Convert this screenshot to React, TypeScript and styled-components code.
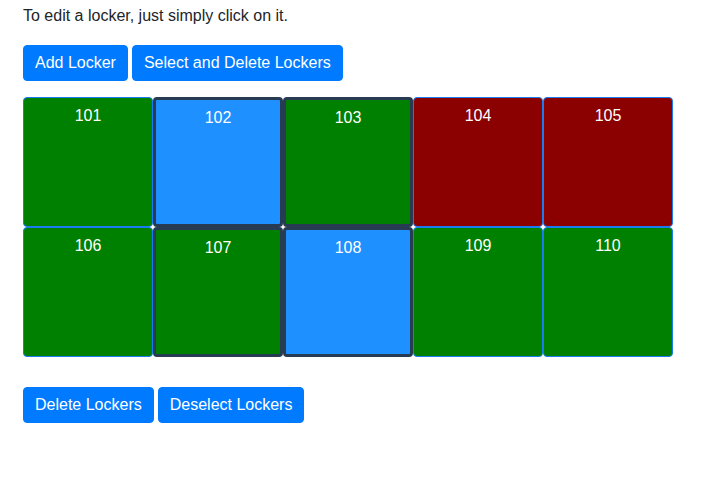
import * as React from 'react';
import styled, { createGlobalStyle } from 'styled-components';

const GlobalStyle = createGlobalStyle`
  body {
    margin: 0;
    background: #fff;
    font-family: "Liberation Sans", Arial, sans-serif;
    color: #212529;
  }
`;

const Page = styled.div`
  padding: 4px 23px;
`;

const Intro = styled.p`
  margin: 0 0 17px;
  font-size: 16px;
  line-height: 24px;
`;

const ButtonRow = styled.div<{ $top?: number }>`
  display: flex;
  gap: 4px;
  margin-top: ${props => props.$top || 0}px;
`;

const Button = styled.button`
  font-family: inherit;
  font-size: 16px;
  line-height: 24px;
  color: #fff;
  background-color: #007bff;
  border: 1px solid #007bff;
  border-radius: 4px;
  padding: 5px 11px;
  cursor: pointer;
`;

const Grid = styled.div`
  display: grid;
  grid-template-columns: repeat(5, 130px);
  grid-auto-rows: 130px;
  margin-top: 16px;
`;

const colors: Record<string, string> = {
  free: '#008000',
  taken: '#8b0000',
  pending: '#1e90ff',
};

const Tile = styled.div<{ $status: string; $selected: boolean }>`
  box-sizing: border-box;
  background-color: ${props => colors[props.$status]};
  border: ${props => (props.$selected ? '3px solid #273c53' : '1px solid #1a7cf0')};
  border-radius: 4px;
  padding-top: 6px;
  color: #fff;
  font-size: 16px;
  line-height: 24px;
  text-align: center;
  cursor: pointer;
`;

const lockers = [
  { id: 101, status: 'free', selected: false },
  { id: 102, status: 'pending', selected: true },
  { id: 103, status: 'free', selected: true },
  { id: 104, status: 'taken', selected: false },
  { id: 105, status: 'taken', selected: false },
  { id: 106, status: 'free', selected: false },
  { id: 107, status: 'free', selected: true },
  { id: 108, status: 'pending', selected: true },
  { id: 109, status: 'free', selected: false },
  { id: 110, status: 'free', selected: false },
];

export default function App() {
  return (
    <React.Fragment>
      <GlobalStyle />
      <Page>
        <Intro>To edit a locker, just simply click on it.</Intro>
        <ButtonRow>
          <Button>Add Locker</Button>
          <Button>Select and Delete Lockers</Button>
        </ButtonRow>
        <Grid>
          {lockers.map(l => (
            <Tile key={l.id} $status={l.status} $selected={l.selected}>
              {l.id}
            </Tile>
          ))}
        </Grid>
        <ButtonRow $top={30}>
          <Button>Delete Lockers</Button>
          <Button>Deselect Lockers</Button>
        </ButtonRow>
      </Page>
    </React.Fragment>
  );
}
